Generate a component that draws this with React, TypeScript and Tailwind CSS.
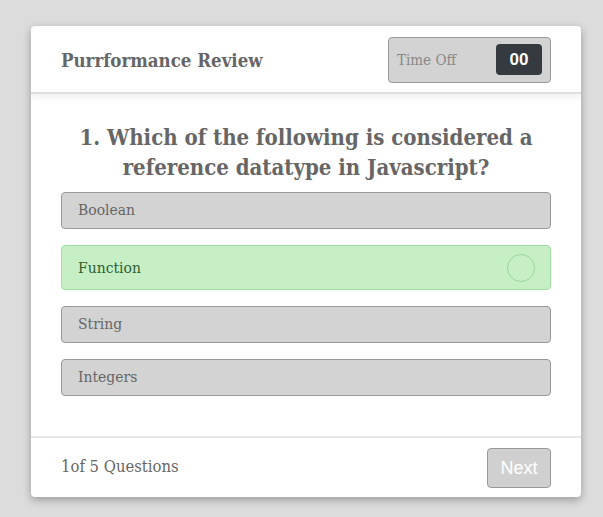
import React from "react";

const serif = { fontFamily: '"DejaVu Serif Condensed", "Liberation Serif", serif' };

export default function App() {
  const options = ["Boolean", "Function", "String", "Integers"];
  return (
    <div className="min-h-[517px] w-full bg-[#dcdcdc] pt-[26px] pl-[31px]" style={serif}>
      <div className="w-[550px] h-[471px] bg-white rounded-[4px] shadow-[0_3px_8px_rgba(0,0,0,0.3)] flex flex-col overflow-hidden">
        <div className="h-[68px] flex items-center justify-between px-[30px] border-b-[2px] border-[#dedede] shadow-[0_4px_6px_rgba(0,0,0,0.06)] relative z-10">
          <div className="text-[18.5px] font-bold text-[#666] mt-[4px]">Purrformance Review</div>
          <div className="w-[163px] h-[46px] bg-[#d3d3d3] border border-[#999] rounded-[4px] flex items-center justify-between pl-[8px] pr-[8px] mt-[1px]">
            <span className="text-[15px] text-[#888] mt-[2px]">Time Off</span>
            <span className="w-[46px] h-[31px] bg-[#343a40] rounded-[4px] text-white text-[17px] font-bold flex items-center justify-center" style={{ fontFamily: '"Liberation Sans", Arial, sans-serif' }}>00</span>
          </div>
        </div>
        <div className="flex-1 px-[30px] pt-[28px]">
          <h1 className="text-center text-[22px] leading-[30px] font-bold text-[#666] mb-[10px]">
            1. Which of the following is considered a reference datatype in Javascript?
          </h1>
          <div className="flex flex-col gap-[16px]">
            {options.map((o) =>
              o === "Function" ? (
                <div key={o} className="h-[45px] rounded-[4px] bg-[#c6efc6] border border-[#9fdf9f] flex items-center justify-between pl-[16px] pr-[15px]">
                  <span className="text-[15.5px] text-[#2e5e2e] mt-[2px]">{o}</span>
                  <span className="w-[28px] h-[28px] rounded-full border border-[#9ad49a]" />
                </div>
              ) : (
                <div key={o} className="h-[37px] rounded-[4px] bg-[#d3d3d3] border border-[#999] flex items-center pl-[16px]">
                  <span className="text-[15.5px] text-[#666] mt-[1px]">{o}</span>
                </div>
              )
            )}
          </div>
        </div>
        <div className="h-[61px] border-t-[2px] border-[#e8e8e8] flex items-center justify-between px-[30px]">
          <span className="text-[16.5px] text-[#666]">1of 5 Questions</span>
          <button className="w-[64px] h-[40px] bg-[#d0d0d0] border border-[#999] rounded-[4px] text-white text-[18px] pt-[2px]" style={{ fontFamily: '"Liberation Sans", Arial, sans-serif' }}>Next</button>
        </div>
      </div>
    </div>
  );
}
